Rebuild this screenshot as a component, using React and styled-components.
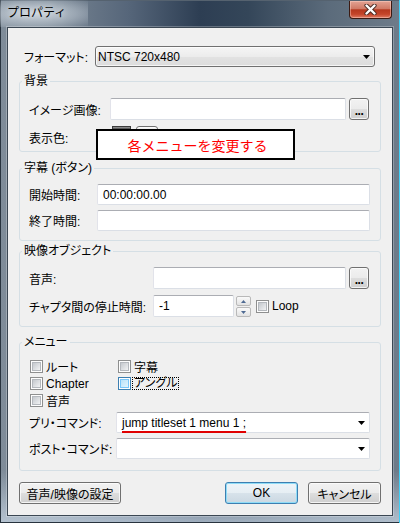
import React from 'react';
import styled, { createGlobalStyle } from 'styled-components';

const GlobalStyle = createGlobalStyle`
  html, body { margin: 0; padding: 0; background: #fff; }
  body {
    font-family: "Liberation Sans", "Noto Sans CJK JP", sans-serif;
    font-size: 12px;
    color: #000;
    font-feature-settings: "palt";
  }
`;

const Window = styled.div`
  position: relative;
  width: 400px;
  height: 523px;
  box-sizing: border-box;
  padding: 0 7px 7px;
  display: flex;
  flex-direction: column;
  background:
    linear-gradient(180deg, rgba(255,255,255,0) 90%, rgba(200,214,228,.75) 100%),
    linear-gradient(90deg, #7f8c99 0%, #7a8794 12%, #56667a 32%, #2d3e53 50%, #344659 62%, #5b6b7b 82%, #6e7c8a 100%);
  box-shadow: inset 1px 0 #28333e, inset -1px 0 #3fd0f8, inset 0 -1px #28333e, inset 0 1px #55626f;
`;

const TitleBar = styled.div`
  flex: none;
  height: 27px;
  display: flex;
  justify-content: space-between;
  align-items: flex-start;
`;

const Title = styled.span`
  margin-left: -7px;
  padding: 0 22px 0 7px;
  height: 27px;
  line-height: 27px;
  font-size: 12px;
  font-feature-settings: normal;
  background: radial-gradient(ellipse at 40% 50%, rgba(214,222,230,.85) 0%, rgba(190,200,210,.55) 55%, rgba(160,172,184,0) 100%);
  text-shadow: 0 0 6px rgba(255,255,255,.9);
`;

const CloseButton = styled.div`
  margin: 1px 1px 0 0;
  width: 43px;
  height: 18px;
  box-sizing: border-box;
  border: 1px solid #3b1a12;
  border-top: none;
  border-radius: 0 0 4px 4px;
  background: linear-gradient(180deg, #e3a394 0%, #d07a66 45%, #b5381f 52%, #c4452a 78%, #de7b63 100%);
  box-shadow: inset 0 0 0 1px rgba(255,214,204,.45);
  display: flex;
  align-items: center;
  justify-content: center;
`;

const Client = styled.div`
  flex: 1;
  background: #f0f0f0;
  border: 1px solid #3b4753;
  box-shadow: 0 0 0 1px rgba(255,255,255,.25);
  display: flex;
  flex-direction: column;
  padding: 18px 11px 0;
`;

const FormatRow = styled.div`
  display: grid;
  grid-template-columns: 71px 1fr;
  height: 21px;
  margin: 0 6px 0 5px;
`;

const Label = styled.span`
  display: flex;
  align-items: center;
  white-space: nowrap;
`;

const Dropdown = styled.div`
  box-sizing: border-box;
  border: 1px solid #707070;
  border-radius: 3px;
  background: linear-gradient(180deg, #f5f5f5 0%, #ececec 50%, #e2e2e2 52%, #dcdcdc 100%);
  box-shadow: inset 0 0 0 1px rgba(255,255,255,.7);
  display: flex;
  align-items: center;
  justify-content: space-between;
  padding: 0 4px 0 2px;
`;

const Group = styled.fieldset`
  margin: ${p => p.$gap}px 0 0;
  padding: 0;
  border: 1px solid #d5dfe5;
  border-radius: 3px;
  min-width: 0;
`;

const Legend = styled.legend`
  margin-left: 2px;
  padding: 0 2px;
  line-height: 14px;
  font-size: 12px;
`;

const Body = styled.div`
  display: flex;
  flex-direction: column;
  gap: ${p => p.$gap}px;
  padding: ${p => p.$pt}px ${p => p.$pr ?? 11}px ${p => p.$pb}px 9px;
`;

const Stack = styled.div`
  display: flex;
  flex-direction: column;
  gap: ${p => p.$gap}px;
`;

const Row = styled.div`
  display: grid;
  grid-template-columns: ${p => p.$label}px 1fr;
  height: ${p => p.$h}px;
`;

const Field = styled.div`
  display: flex;
  gap: 3px;
  min-width: 0;
`;

const TextBox = styled.div`
  flex: ${p => (p.$w ? 'none' : '1')};
  width: ${p => (p.$w ? `${p.$w}px` : 'auto')};
  box-sizing: border-box;
  background: #fff;
  border: 1px solid #dbdfe6;
  border-top-color: #abadb3;
  border-left-color: #e2e3ea;
  border-radius: 2px;
  display: flex;
  align-items: center;
  justify-content: space-between;
  padding: 0 4px 0 5px;
  white-space: nowrap;
`;

const Marked = styled.span`
  text-decoration: underline;
  text-decoration-color: #e00000;
  text-decoration-thickness: 2px;
  text-underline-offset: 4px;
`;

const VistaButton = styled.div`
  box-sizing: border-box;
  border: 1px solid ${p => (p.$default ? '#3c7fb1' : '#707070')};
  border-radius: 3px;
  background: ${p =>
    p.$default
      ? 'linear-gradient(180deg, #eef4f8 0%, #e6eef3 50%, #d7e2ea 52%, #cbd8e2 100%)'
      : 'linear-gradient(180deg, #f2f2f2 0%, #ebebeb 50%, #dddddd 52%, #cfcfcf 100%)'};
  box-shadow: inset 0 0 0 1px ${p => (p.$default ? '#8fdcf7' : 'rgba(252,252,252,.8)')};
  display: flex;
  align-items: center;
  justify-content: center;
  white-space: nowrap;
`;

const BrowseButton = styled(VistaButton)`
  width: 20px;
  align-items: flex-end;
  padding-bottom: 3px;
  font-weight: bold;
  line-height: 10px;
  letter-spacing: -0.5px;
`;

const Swatch = styled.div`
  width: 19px;
  height: 20px;
  margin-left: 2px;
  box-sizing: border-box;
  background: #5a5a5a;
  border: 1px solid #3c3c3c;
  box-shadow: inset 0 1px #8a8a8a;
`;

const ColorButton = styled(VistaButton)`
  width: 22px;
  height: 20px;
  margin-left: 2px;
`;

const Spinner = styled.div`
  width: 15px;
  margin: 1px 0 0 -1px;
  display: flex;
  flex-direction: column;
  gap: 1px;
`;

const SpinButton = styled.div`
  flex: 1;
  border: 1px solid #b9b9b9;
  border-radius: 2px;
  background: linear-gradient(180deg, #fafafa, #e2e2e2);
  display: flex;
  align-items: center;
  justify-content: center;
`;

const CheckGrid = styled.div`
  display: grid;
  grid-template-columns: 88px auto;
  grid-auto-rows: 17px;
  align-items: center;
`;

const CheckItem = styled.label`
  display: flex;
  align-items: center;
  gap: 3px;
  padding-left: 1px;
  margin-left: ${p => p.$ml || 0}px;
  white-space: nowrap;
`;

const Box = styled.span`
  width: 13px;
  height: 13px;
  box-sizing: border-box;
  border: 1px solid ${p => (p.$focus ? '#3c7fb1' : '#8e8f8f')};
  background: #fdfdfd;
  padding: 1px;
  &::after {
    content: '';
    display: block;
    width: 100%;
    height: 100%;
    box-sizing: border-box;
    border: 1px solid ${p => (p.$focus ? '#79c6f9' : '#b4b8bd')};
    background: ${p =>
      p.$focus
        ? 'linear-gradient(135deg, #b9e2f9 0%, #e2f4fd 100%)'
        : 'linear-gradient(135deg, #c4c8cd 0%, #f1f2f3 100%)'};
  }
`;

const FocusText = styled.span`
  margin-left: -2px;
  padding: 0 1px;
  line-height: 11px;
  border: 1px dotted #000;
`;

const ButtonRow = styled.div`
  display: flex;
  gap: 10px;
  height: 22px;
  margin-top: 11px;
`;

const DialogButton = styled(VistaButton)`
  width: ${p => p.$w}px;
  margin-right: ${p => (p.$push ? 'auto' : '0')};
`;

const Callout = styled.div`
  position: absolute;
  left: 96px;
  top: 129px;
  width: 199px;
  height: 31px;
  box-sizing: border-box;
  border: 2px solid #000;
  background: #fff;
  color: #ff0000;
  font-family: "Noto Sans CJK JP", sans-serif;
  font-size: 14px;
  font-feature-settings: normal;
  display: flex;
  align-items: center;
  justify-content: center;
  padding-left: 4px;
`;

const ArrowDown = () => (
  <svg width="7" height="4" viewBox="0 0 7 4">
    <path d="M0 0h7L3.5 4z" fill="#000" />
  </svg>
);

const SpinArrow = ({ up }) => (
  <svg width="5" height="3" viewBox="0 0 5 3">
    <path d={up ? 'M0 3h5L2.5 0z' : 'M0 0h5L2.5 3z'} fill="#4e6a92" />
  </svg>
);

const CloseIcon = () => (
  <svg width="13" height="11" viewBox="0 0 13 11">
    <path d="M2.5 1.5l8 8M10.5 1.5l-8 8" stroke="#4a2a22" strokeWidth="4.2" strokeLinecap="round" />
    <path d="M2.5 1.5l8 8M10.5 1.5l-8 8" stroke="#fff" strokeWidth="2.4" strokeLinecap="round" />
  </svg>
);

const Check = ({ children, focus, ml }) => (
  <CheckItem $ml={ml}>
    <Box $focus={focus} />
    {focus ? <FocusText>{children}</FocusText> : <span>{children}</span>}
  </CheckItem>
);

export default function App() {
  return (
    <>
      <GlobalStyle />
      <Window>
        <TitleBar>
          <Title>プロパティ</Title>
          <CloseButton><CloseIcon /></CloseButton>
        </TitleBar>

        <Client>
          <FormatRow>
            <Label>フォーマット:</Label>
            <Dropdown>
              <span>NTSC 720x480</span>
              <ArrowDown />
            </Dropdown>
          </FormatRow>

          <Group $gap={7}>
            <Legend>背景</Legend>
            <Body $pt={10} $pb={3} $gap={6}>
              <Row $label={81} $h={22}>
                <Label>イメージ画像:</Label>
                <Field>
                  <TextBox />
                  <BrowseButton>...</BrowseButton>
                </Field>
              </Row>
              <Row $label={81} $h={22}>
                <Label>表示色:</Label>
                <Field>
                  <Swatch />
                  <ColorButton />
                </Field>
              </Row>
            </Body>
          </Group>

          <Group $gap={9}>
            <Legend>字幕 (ボタン)</Legend>
            <Body $pt={9} $pb={9} $pr={10} $gap={5}>
              <Row $label={68} $h={21}>
                <Label>開始時間:</Label>
                <TextBox>00:00:00.00</TextBox>
              </Row>
              <Row $label={68} $h={21}>
                <Label>終了時間:</Label>
                <TextBox />
              </Row>
            </Body>
          </Group>

          <Group $gap={3}>
            <Legend>映像オブジェクト</Legend>
            <Body $pt={9} $pb={9} $gap={6}>
              <Row $label={124} $h={22}>
                <Label>音声:</Label>
                <Field>
                  <TextBox />
                  <BrowseButton>...</BrowseButton>
                </Field>
              </Row>
              <Row $label={124} $h={22}>
                <Label>チャプタ間の停止時間:</Label>
                <Field>
                  <TextBox $w={81}>-1</TextBox>
                  <Spinner>
                    <SpinButton><SpinArrow up /></SpinButton>
                    <SpinButton><SpinArrow /></SpinButton>
                  </Spinner>
                  <Check ml={1}>Loop</Check>
                </Field>
              </Row>
            </Body>
          </Group>

          <Group $gap={8}>
            <Legend>メニュー</Legend>
            <Body $pt={9} $pb={11} $pr={10} $gap={3}>
              <CheckGrid>
                <Check>ルート</Check>
                <Check>字幕</Check>
                <Check>Chapter</Check>
                <Check focus>アングル</Check>
                <Check>音声</Check>
              </CheckGrid>
              <Stack $gap={5}>
                <Row $label={87} $h={21}>
                  <Label>プリ・コマンド:</Label>
                  <TextBox>
                    <Marked>jump titleset 1 menu 1 ;</Marked>
                    <ArrowDown />
                  </TextBox>
                </Row>
                <Row $label={87} $h={21}>
                  <Label>ポスト・コマンド:</Label>
                  <TextBox>
                    <span />
                    <ArrowDown />
                  </TextBox>
                </Row>
              </Stack>
            </Body>
          </Group>

          <ButtonRow>
            <DialogButton $w={102} $push>音声/映像の設定</DialogButton>
            <DialogButton $w={73} $default>OK</DialogButton>
            <DialogButton $w={73}>キャンセル</DialogButton>
          </ButtonRow>
        </Client>

        <Callout>各メニューを変更する</Callout>
      </Window>
    </>
  );
}
